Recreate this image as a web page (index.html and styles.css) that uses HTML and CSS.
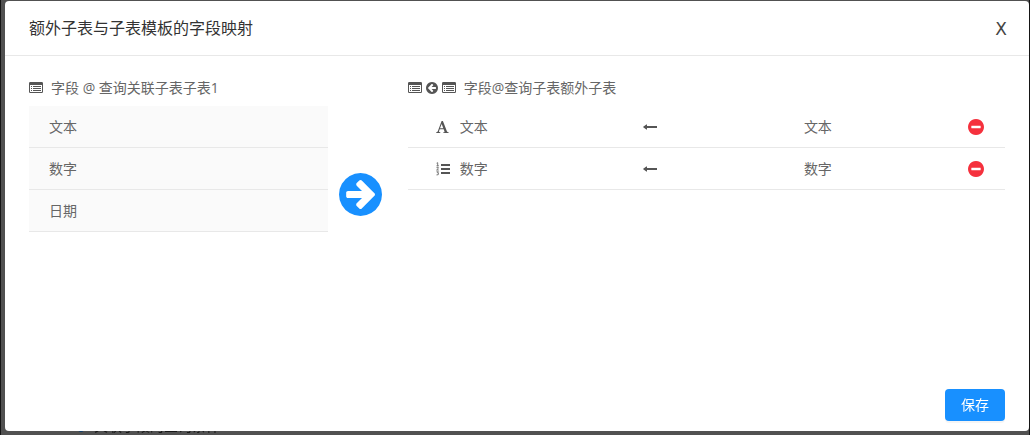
FILE: index.html
```html
<!DOCTYPE html>
<html lang="zh-CN">
<head>
<meta charset="utf-8">
<title>额外子表与子表模板的字段映射</title>
<link rel="stylesheet" href="styles.css">
</head>
<body>
<svg class="sprite" aria-hidden="true">
  <symbol id="circle-right" viewBox="128 128 1536 1536"><path d="M1413 896q0-27-18-45l-91-91-362-362q-18-18-45-18t-45 18l-91 91q-18 18-18 45t18 45l189 189h-502q-26 0-45 19t-19 45v128q0 26 19 45t45 19h502l-189 189q-19 19-19 45t19 45l91 91q18 18 45 18t45-18l362-362 91-91q18-18 18-45zm251 0q0 209-103 385.5t-279.5 279.5-385.5 103-385.5-103-279.5-279.5-103-385.5 103-385.5 279.5-279.5 385.5-103 385.5 103 279.5 279.5 103 385.5z"/></symbol>
  <symbol id="circle-minus" viewBox="128 128 1536 1536"><path d="M1344 960v-128q0-26-19-45t-45-19h-768q-26 0-45 19t-19 45v128q0 26 19 45t45 19h768q26 0 45-19t19-45zm320-64q0 209-103 385.5t-279.5 279.5-385.5 103-385.5-103-279.5-279.5-103-385.5 103-385.5 279.5-279.5 385.5-103 385.5 103 279.5 279.5 103 385.5z"/></symbol>
  <symbol id="list-alt" viewBox="0 0 14 12"><path fill-rule="evenodd" d="M1.200 0h11.600a1.200 1.200 0 0 1 1.200 1.200v8.600a1.200 1.200 0 0 1-1.200 1.200H1.200A1.200 1.200 0 0 1 0 9.800V1.200A1.200 1.200 0 0 1 1.200 0zM1 3v6.700q0 .3.3.3h11.400q.3 0 .3-.3V3z"/><path d="M2 4h1v1H2zM4 4h8v1H4zM2 6h1v1H2zM4 6h8v1H4zM2 8h1v1H2zM4 8h8v1H4z"/></symbol>
  <symbol id="font-type" viewBox="0 0 13 13"><path fill-rule="evenodd" d="M5.600 0h1.300l4 10.300q.3.900 1.700 1v.7H7.300v-.7q1.500 0 1.200-.9L7.700 8.200H3.700l-.7 2q-.3 1 1.300 1.100v.7H.2v-.7q1.200-.1 1.600-1.100zM4 7.300h3.300L5.700 2.900z"/></symbol>
  <symbol id="list-ol" viewBox="0 0 14 14"><path d="M5 2h9v2H5zM5 6h9v2H5zM5 10h9v2H5z"/><path class="line" d="M.6 1.200 1.700.7v3M.5 3.800h2.400M.5 5.600q2-1 2 .2 0 .6-1.900 2.200h2.200M.5 9.800h2L1.500 11q1.200 0 1.200 1t-2.200.9"/></symbol>
  <symbol id="long-left" viewBox="0 0 14 8"><path d="M14 3v2H4v1.300q0 .6-.6.3L.2 4.300Q0 4 .2 3.700L3.400 1.400Q4 1.100 4 1.700V3z"/></symbol>
</svg>

<div class="page"><p class="page-item"><span class="dot"></span>关联子段的查询条件</p></div>

<section class="modal" role="dialog" aria-labelledby="modal-title">
  <header class="modal-header">
    <h1 id="modal-title" class="modal-title">额外子表与子表模板的字段映射</h1>
    <button class="close" type="button" aria-label="关闭">X</button>
  </header>

  <div class="modal-body">
    <div class="source">
      <h2 class="caption"><svg class="icon-list"><use href="#list-alt"/></svg><span class="caption-text">字段 @ 查询关联子表子表1</span></h2>
      <ul class="list source-list">
        <li class="source-row">文本</li>
        <li class="source-row">数字</li>
        <li class="source-row">日期</li>
      </ul>
    </div>

    <div class="transfer">
      <button class="icon-button" type="button" aria-label="添加映射"><svg class="icon-transfer"><use href="#circle-right"/></svg></button>
    </div>

    <div class="target">
      <h2 class="caption"><svg class="icon-list"><use href="#list-alt"/></svg><svg class="icon-back"><use href="#circle-right"/></svg><svg class="icon-list"><use href="#list-alt"/></svg><span class="caption-text">字段@查询子表额外子表</span></h2>
      <ul class="list">
        <li class="map-row">
          <svg class="icon-font"><use href="#font-type"/></svg>
          <span>文本</span>
          <svg class="icon-arrow"><use href="#long-left"/></svg>
          <span>文本</span>
          <button class="icon-button" type="button" aria-label="删除文本"><svg class="icon-remove"><use href="#circle-minus"/></svg></button>
        </li>
        <li class="map-row">
          <svg class="icon-number"><use href="#list-ol"/></svg>
          <span>数字</span>
          <svg class="icon-arrow"><use href="#long-left"/></svg>
          <span>数字</span>
          <button class="icon-button" type="button" aria-label="删除数字"><svg class="icon-remove"><use href="#circle-minus"/></svg></button>
        </li>
      </ul>
    </div>
  </div>

  <footer class="modal-footer">
    <button class="save" type="button">保存</button>
  </footer>
</section>
</body>
</html>
```

FILE: styles.css
```css
* {
  box-sizing: border-box;
}

body {
  margin: 0;
  min-height: 100vh;
  padding: 1px 1px 4px 5px;
  display: flex;
  background: #515151;
  font: 14px/22px "Open Sans", "Noto Sans CJK SC", sans-serif;
  color: #666;
}

h1, h2, p, ul {
  margin: 0;
  padding: 0;
  font-size: inherit;
  font-weight: 400;
}

button {
  font: inherit;
  border: 0;
  padding: 0;
  background: none;
  cursor: pointer;
}

svg {
  display: block;
  fill: currentColor;
  color: #555;
}

.sprite {
  position: absolute;
  width: 0;
  height: 0;
}

.line {
  fill: none;
  stroke: currentColor;
  stroke-width: 0.8;
}

.page {
  position: fixed;
  inset: 0;
  display: flex;
  align-items: flex-end;
  border: solid #151515;
  border-width: 0 1px;
  padding-left: 77px;
  overflow: hidden;
  color: #161616;
}

.page-item {
  display: flex;
  align-items: center;
  gap: 10px;
  line-height: 18px;
}

.dot {
  width: 6px;
  height: 12px;
  border-radius: 3px;
  background: #0b3d6c;
}

.modal {
  position: relative;
  flex: 1;
  display: flex;
  flex-direction: column;
  border-radius: 4px;
  background: #fff;
}

.modal-header {
  display: flex;
  align-items: center;
  justify-content: space-between;
  padding: 16px 22px 16px 24px;
  border-bottom: 1px solid #e8e8e8;
}

.modal-title {
  font-size: 16px;
  color: #333;
}

.close {
  padding-top: 2px;
  font-family: "DejaVu Sans", sans-serif;
  font-size: 17px;
  line-height: 20px;
  color: #444;
}

.modal-body {
  flex: 1;
  display: grid;
  grid-template-columns: 1fr 80px 2fr;
  padding: 21px 24px;
}

.caption {
  display: flex;
  align-items: center;
  gap: 4px;
  margin-bottom: 7px;
}

.caption-text {
  margin-left: 4px;
}

.list {
  list-style: none;
}

.source-list {
  background: #fafafa;
}

.source-row,
.map-row {
  padding: 10px 20px 9px;
  border-bottom: 1px solid #e8e8e8;
}

.map-row {
  display: grid;
  grid-template-columns: 24px 183fr 161fr 164fr 16px;
  align-items: center;
  padding-right: 21px;
  padding-left: 28px;
}

.transfer {
  display: flex;
  align-items: flex-start;
  justify-content: center;
  padding: 96px 14px 0 0;
}

.icon-list {
  width: 14px;
  height: 12px;
}

.icon-back {
  width: 12px;
  height: 12px;
  transform: scaleX(-1);
}

.icon-transfer {
  width: 43px;
  height: 43px;
  color: #1890ff;
}

.icon-font {
  width: 13px;
  height: 13px;
}

.icon-number {
  width: 14px;
  height: 14px;
}

.icon-arrow {
  width: 14px;
  height: 8px;
}

.icon-remove {
  width: 16px;
  height: 16px;
  color: #f5313d;
}

.modal-footer {
  display: flex;
  justify-content: flex-end;
  padding: 10px 24px;
}

.save {
  height: 32px;
  padding: 0 16px;
  border-radius: 4px;
  background: #1890ff;
  color: #fff;
  box-shadow: 0 2px 0 rgba(0, 0, 0, 0.04);
}
```
